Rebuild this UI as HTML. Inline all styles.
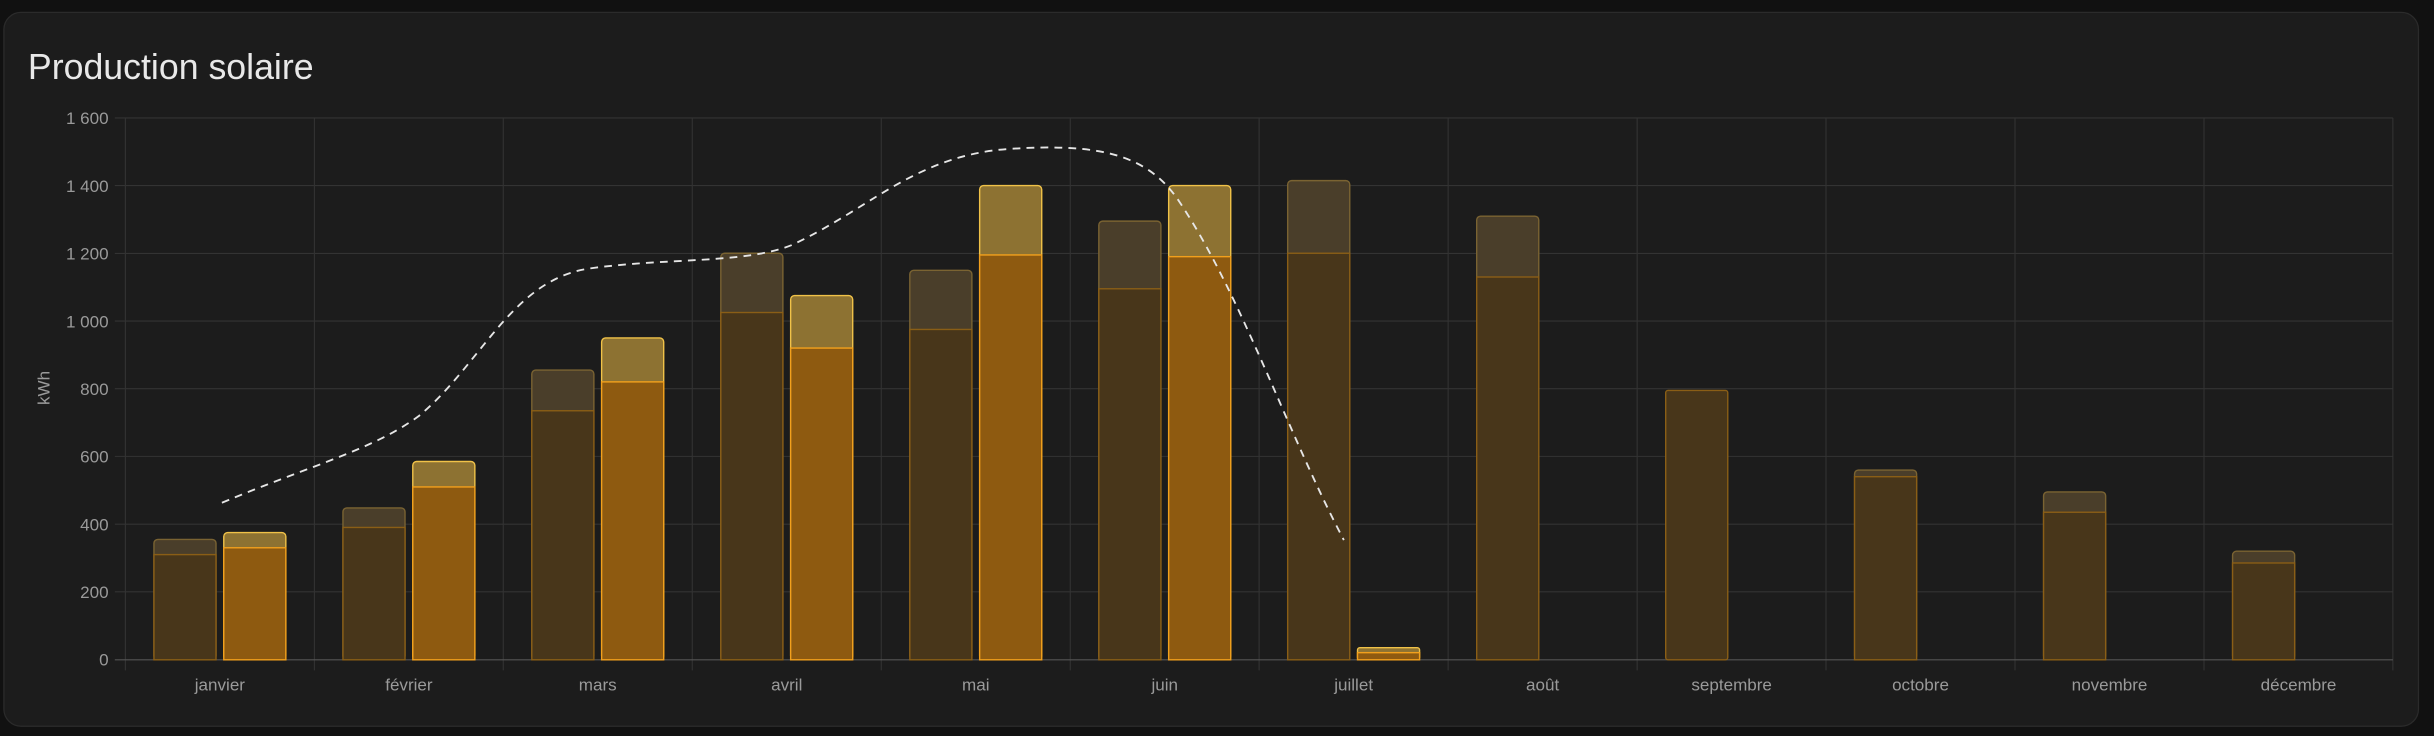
<!DOCTYPE html>
<html><head><meta charset="utf-8"><style>
html,body{margin:0;padding:0;background:#111;width:2434px;height:736px;overflow:hidden}
svg{display:block}
text{font-family:"Liberation Sans",sans-serif}
</style></head><body>
<svg width="2434" height="736" viewBox="0 0 1568.5 474.3" preserveAspectRatio="none">
<rect x="2.5" y="8" width="1556" height="460" rx="11" fill="#1c1c1c" stroke="#2b2b2b" stroke-width="0.8"/>
<text x="18" y="51" font-size="23" fill="#e8e8e8">Production solaire</text>
<g stroke="#333" stroke-width="0.7">
<line x1="74" y1="76" x2="1542" y2="76"/><line x1="74" y1="119.6" x2="1542" y2="119.6"/>
<line x1="74" y1="163.3" x2="1542" y2="163.3"/><line x1="74" y1="206.9" x2="1542" y2="206.9"/>
<line x1="74" y1="250.5" x2="1542" y2="250.5"/><line x1="74" y1="294.1" x2="1542" y2="294.1"/>
<line x1="74" y1="337.8" x2="1542" y2="337.8"/><line x1="74" y1="381.4" x2="1542" y2="381.4"/>
<line x1="80.8" y1="76" x2="80.8" y2="432"/><line x1="202.6" y1="76" x2="202.6" y2="432"/>
<line x1="324.3" y1="76" x2="324.3" y2="432"/><line x1="446.1" y1="76" x2="446.1" y2="432"/>
<line x1="567.9" y1="76" x2="567.9" y2="432"/><line x1="689.7" y1="76" x2="689.7" y2="432"/>
<line x1="811.4" y1="76" x2="811.4" y2="432"/><line x1="933.2" y1="76" x2="933.2" y2="432"/>
<line x1="1055" y1="76" x2="1055" y2="432"/><line x1="1176.7" y1="76" x2="1176.7" y2="432"/>
<line x1="1298.5" y1="76" x2="1298.5" y2="432"/><line x1="1420.3" y1="76" x2="1420.3" y2="432"/>
<line x1="1542" y1="76" x2="1542" y2="432"/>
</g>
<line x1="74" y1="425.2" x2="1542" y2="425.2" stroke="#555" stroke-width="0.8"/>
<g font-size="11" fill="#9a9a9a" text-anchor="end">
<text x="70" y="80">1 600</text><text x="70" y="123.6">1 400</text><text x="70" y="167.3">1 200</text>
<text x="70" y="210.9">1 000</text><text x="70" y="254.5">800</text><text x="70" y="298.1">600</text>
<text x="70" y="341.8">400</text><text x="70" y="385.4">200</text><text x="70" y="429">0</text>
</g>
<text transform="translate(32,250) rotate(-90)" font-size="11" fill="#9a9a9a" text-anchor="middle">kWh</text>
<g font-size="11" fill="#9a9a9a" text-anchor="middle">
<text x="141.7" y="445">janvier</text><text x="263.5" y="445">février</text><text x="385.2" y="445">mars</text>
<text x="507" y="445">avril</text><text x="628.8" y="445">mai</text><text x="750.6" y="445">juin</text>
<text x="872.3" y="445">juillet</text><text x="994.1" y="445">août</text><text x="1115.9" y="445">septembre</text>
<text x="1237.6" y="445">octobre</text><text x="1359.4" y="445">novembre</text><text x="1481.2" y="445">décembre</text>
</g>
<g stroke-width="0.9">
<g fill="#4a3e2a" stroke="#7a6332">
<rect x="99.2" y="347.6" width="40" height="77.6" rx="2.5"/>
<rect x="221" y="327.3" width="40" height="97.9" rx="2.5"/>
<rect x="342.7" y="238.5" width="40" height="186.7" rx="2.5"/>
<rect x="464.5" y="163.2" width="40" height="262" rx="2.5"/>
<rect x="586.3" y="174.2" width="40" height="251" rx="2.5"/>
<rect x="708.1" y="142.5" width="40" height="282.7" rx="2.5"/>
<rect x="829.8" y="116.4" width="40" height="308.8" rx="2.5"/>
<rect x="951.6" y="139.3" width="40" height="285.9" rx="2.5"/>
<rect x="1195.1" y="302.9" width="40" height="122.3" rx="2.5"/>
<rect x="1316.9" y="317" width="40" height="108.2" rx="2.5"/>
<rect x="1438.7" y="355.2" width="40" height="70" rx="2.5"/>
</g>
<g fill="#48361a" stroke="#8a5e16">
<rect x="99.2" y="357.4" width="40" height="67.8"/>
<rect x="221" y="339.9" width="40" height="85.3"/>
<rect x="342.7" y="264.7" width="40" height="160.5"/>
<rect x="464.5" y="201.4" width="40" height="223.8"/>
<rect x="586.3" y="212.3" width="40" height="212.9"/>
<rect x="708.1" y="186.1" width="40" height="239.1"/>
<rect x="829.8" y="163.2" width="40" height="262"/>
<rect x="951.6" y="178.5" width="40" height="246.7"/>
<rect x="1073.4" y="251.6" width="40" height="173.6" rx="1.5"/>
<rect x="1195.1" y="307.2" width="40" height="118"/>
<rect x="1316.9" y="330.1" width="40" height="95.1"/>
<rect x="1438.7" y="362.8" width="40" height="62.4"/>
</g>
<g fill="#8d7232" stroke="#f0c248">
<rect x="144.2" y="343.2" width="40" height="82" rx="2.5"/>
<rect x="266" y="297.4" width="40" height="127.8" rx="2.5"/>
<rect x="387.7" y="217.8" width="40" height="207.4" rx="2.5"/>
<rect x="509.5" y="190.5" width="40" height="234.7" rx="2.5"/>
<rect x="631.3" y="119.6" width="40" height="305.6" rx="2.5"/>
<rect x="753.1" y="119.6" width="40" height="305.6" rx="2.5"/>
<rect x="874.8" y="417.4" width="40" height="7.8" rx="1.5"/>
</g>
<g fill="#8e5a10" stroke="#f2a01c">
<rect x="144.2" y="353" width="40" height="72.2"/>
<rect x="266" y="313.8" width="40" height="111.4"/>
<rect x="387.7" y="246.1" width="40" height="179.1"/>
<rect x="509.5" y="224.3" width="40" height="200.9"/>
<rect x="631.3" y="164.3" width="40" height="260.9"/>
<rect x="753.1" y="165.4" width="40" height="259.8"/>
<rect x="874.8" y="420.6" width="40" height="4.6"/>
</g>
</g>
<path d="M143,324 C200,300 240,290 270,268 C310,235 330,180 380,173 C430,166 480,170 510,158 C560,135 590,100 650,96 C710,92 740,100 760,130 C800,190 830,280 866,348" fill="none" stroke="#e6e6e6" stroke-width="1.2" stroke-dasharray="5,4"/>
</svg>
</body></html>
